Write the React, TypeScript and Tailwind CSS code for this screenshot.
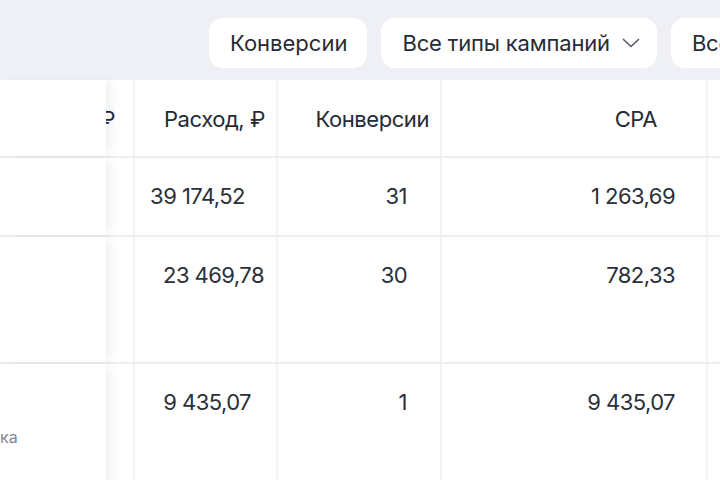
import * as React from 'react'

type Row = {
  height: string
  spend: string
  spendPad: string
  conv: string
  cpa: string
  note?: string
}

const rows: Row[] = [
  { height: 'h-[79px]', spend: '39\u00a0174,52', spendPad: 'pr-[31px]', conv: '31', cpa: '1\u00a0263,69' },
  { height: 'h-[127px]', spend: '23\u00a0469,78', spendPad: 'pr-[12px]', conv: '30', cpa: '782,33' },
  { height: 'h-[130px]', spend: '9\u00a0435,07', spendPad: 'pr-[25px]', conv: '1', cpa: '9\u00a0435,07', note: 'ка' }
]

function Chevron() {
  return (
    <svg width="18" height="10" viewBox="0 0 18 10" fill="none" className="shrink-0">
      <path d="M1.5 1.5L9 8.5L16.5 1.5" stroke="#5b606b" strokeWidth="1.7" strokeLinecap="round" strokeLinejoin="round" />
    </svg>
  )
}

function FilterButton({ label, chevron }: { label: string; chevron?: boolean }) {
  return (
    <div
      className={`flex h-[50px] shrink-0 items-center whitespace-nowrap rounded-[14px] bg-white pl-[21px] text-[22px] text-[#272b35] ${
        chevron ? 'gap-[12px] pr-[17px] tracking-[-0.008em]' : 'pr-[20px]'
      }`}
    >
      <span>{label}</span>
      {chevron ? <Chevron /> : null}
    </div>
  )
}

export default function App() {
  return (
    <div className="h-[480px] w-[720px] overflow-hidden bg-white font-['Inter',sans-serif]">
      <div className="flex h-[80px] items-center gap-[14px] bg-[#eef0f5] pl-[209px] pt-[6px]">
        <FilterButton label="Конверсии" />
        <FilterButton label="Все типы кампаний" chevron />
        <FilterButton label="Все статусы" chevron />
      </div>

      <div className="flex flex-col">
        <div className="flex h-[78px] border-b-2 border-[#eceef2] text-[22px] tracking-[-0.02em] text-[#262a34]">
          <div className="relative z-10 w-[106px] shrink-0 bg-white shadow-[7px_0_10px_-3px_rgba(30,40,60,0.08)]" />
          <div className="flex w-[29px] shrink-0 items-center justify-end whitespace-nowrap border-r-2 border-[#f1f2f5] pr-[18px] pt-[3px]">
            Доход, ₽
          </div>
          <div className="flex w-[143px] shrink-0 items-center justify-end border-r-2 border-[#f1f2f5] pr-[11px] pt-[3px]">
            Расход, ₽
          </div>
          <div className="flex w-[164px] shrink-0 items-center justify-end border-r-2 border-[#f1f2f5] pr-[11px] pt-[3px]">
            Конверсии
          </div>
          <div className="flex w-[266px] shrink-0 items-center justify-end border-r-2 border-[#f1f2f5] pr-[49px] pt-[3px]">
            CPA
          </div>
          <div className="flex-1" />
        </div>

        {rows.map((row, i) => (
          <div
            key={i}
            className={`flex ${row.height} shrink-0 border-b-2 border-[#eceef2] text-[22px] text-[#2b2f39]`}
          >
            <div className="relative z-10 w-[106px] shrink-0 bg-white pt-[55px] shadow-[7px_0_10px_-3px_rgba(30,40,60,0.08)]">
              {row.note ? (
                <span className="text-[16px] text-[#7f879a]">{row.note}</span>
              ) : null}
            </div>
            <div className="w-[29px] shrink-0 border-r-2 border-[#f1f2f5]" />
            <div className={`flex w-[143px] shrink-0 justify-end whitespace-nowrap border-r-2 border-[#f1f2f5] pt-[22px] tracking-[-0.025em] ${row.spendPad}`}>
              {row.spend}
            </div>
            <div className="flex w-[164px] shrink-0 justify-end border-r-2 border-[#f1f2f5] pr-[33px] pt-[22px] tracking-[-0.025em]">
              {row.conv}
            </div>
            <div className="flex w-[266px] shrink-0 justify-end whitespace-nowrap border-r-2 border-[#f1f2f5] pr-[31px] pt-[22px] tracking-[-0.025em]">
              {row.cpa}
            </div>
            <div className="flex-1" />
          </div>
        ))}
      </div>
    </div>
  )
}
